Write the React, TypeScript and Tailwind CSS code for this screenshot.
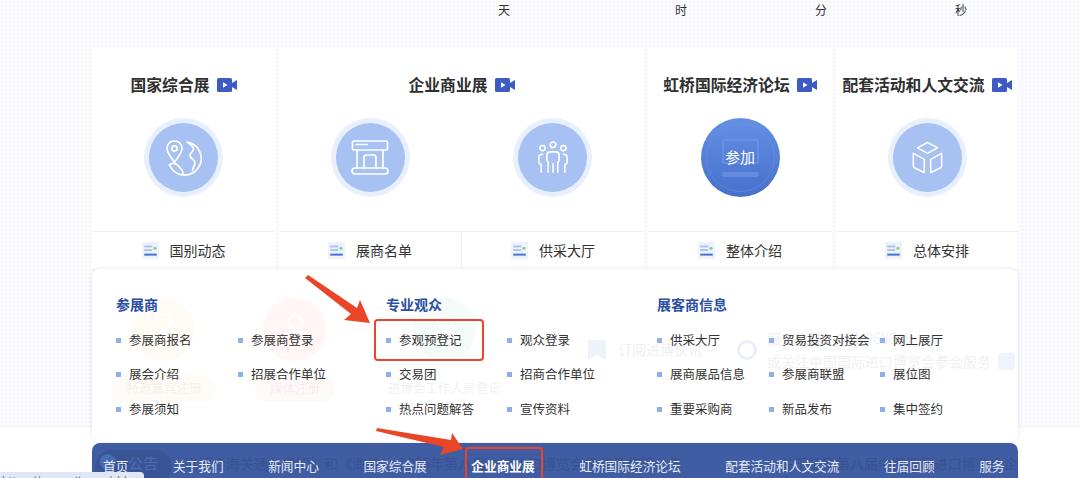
import type { ReactNode } from "react";

const FONT = "font-['Noto_Sans_CJK_SC','Liberation_Sans',sans-serif]";

const Camera = () => (
  <svg width="20" height="14" viewBox="0 0 20 14" className="shrink-0">
    <rect x="0" y="0" width="15" height="14" rx="1.5" fill="#3d5bc4" />
    <path d="M15 5l5-3v10l-5-3z" fill="#3d5bc4" />
    <path d="M6 4.2l4.5 2.8L6 9.8z" fill="#fff" />
  </svg>
);

const ListIcon = () => (
  <svg width="17" height="17" viewBox="0 0 19 19" className="shrink-0">
    <rect width="19" height="19" fill="#eef2fb" />
    <rect x="2.5" y="4" width="9" height="2" fill="#a9bfee" />
    <rect x="2.5" y="8" width="9" height="2" fill="#a9bfee" />
    <rect x="2.5" y="13" width="14" height="2.2" fill="#3f74dc" />
    <circle cx="14.5" cy="7" r="1.8" fill="#7fd28f" />
  </svg>
);

const iconProps = {
  fill: "none",
  stroke: "#fff",
  strokeWidth: 1.7,
  strokeLinecap: "round" as const,
  strokeLinejoin: "round" as const,
};

const GlobeIcon = () => (
  <svg width="36" height="36" viewBox="0 0 36 36" {...iconProps}>
    <path d="M8.5 1C4 1 1 4.400 1 8.500c0 4.800 4.800 9.500 7.500 14 2.700-4.500 7.500-9.200 7.500-14C16 4.400 13 1 8.500 1z" />
    <circle cx="8.5" cy="8.5" r="2.6" />
    <path d="M21 2.200A16.500 16.500 0 1 1 3.500 25" />
    <path d="M22 2.500c2.500 2 5.500 4 5.500 6.500 0 3-3.500 3.500-3.500 6.500 0 3.500 5 3.500 5 7 0 3-2 4.500-2.500 8" />
    <path d="M3.500 24.500c3-1.500 6.500-1 8.500 1 2 2.200 4.500 3 5.500 9" />
  </svg>
);

const BoothIcon = () => (
  <svg width="38" height="35" viewBox="0 0 38 35" {...iconProps}>
    <rect x="1.5" y="1" width="35" height="9" rx="1.5" />
    <path d="M5 4.500h11" />
    <path d="M6 10v18M32 10v18" />
    <rect x="1" y="28" width="36" height="6" rx="3" />
    <path d="M13 28V17.500a2.500 2.500 0 0 1 2.500-2.500h7a2.500 2.500 0 0 1 2.500 2.500V28" />
  </svg>
);

const PeopleIcon = () => (
  <svg width="32" height="34" viewBox="0 0 32 36" {...iconProps}>
    <circle cx="16" cy="4" r="3" />
    <circle cx="5" cy="7.5" r="2.8" />
    <circle cx="27" cy="7.5" r="2.8" />
    <path d="M11 33V22.500c-1.500-.5-1.500-1.500-1.500-3V15c0-2 1.500-3.500 3.500-3.500h6c2 0 3.500 1.500 3.500 3.500v4.500c0 1.500 0 2.500-1.500 3V33" />
    <path d="M16 24v9" />
    <path d="M5 14c-2.500 0-4 1-4 3.500v5c0 1.500 1.500 2 2.500 2.500v8" />
    <path d="M27 14c2.500 0 4 1 4 3.500v5c0 1.500-1.500 2-2.500 2.500v8" />
  </svg>
);

const BoxIcon = () => (
  <svg width="31" height="33" viewBox="0 0 34 36" {...iconProps}>
    <path d="M17 1.500L28 7.500 17 13.500 6 7.500z" />
    <path d="M1.500 13.500l12 6.500v14.500L3 29.500c-1-.5-1.500-1.200-1.500-2.500z" />
    <path d="M32.500 13.500l-12 6.500v14.500l10.500-5c1-.5 1.500-1.200 1.500-2.500z" />
  </svg>
);

const Circle = ({ children }: { children: ReactNode }) => (
  <div className="w-[79px] h-[79px] rounded-full bg-[#e8f0fe] flex items-center justify-center">
    <div className="w-[69px] h-[69px] rounded-full bg-[#a7c1f3] flex items-center justify-center">
      {children}
    </div>
  </div>
);

const JoinCircle = () => (
  <div className="relative w-[79px] h-[79px] rounded-full bg-gradient-to-b from-[#6490e4] to-[#4670cb] flex items-center justify-center">
    <div className="absolute inset-[5px] rounded-full border border-[#6f95e2] opacity-50" />
    <div className="absolute left-[21px] top-[21px] w-[37px] h-[25px] rounded-[2px] border-2 border-[#7498e4] opacity-60" />
    <div className="absolute left-[21px] top-[54px] w-[37px] h-[5px] rounded-full bg-[#7498e4] opacity-60" />
    <span className="relative text-white text-[15px]">参加</span>
  </div>
);

const Foot = ({ label, border }: { label: string; border?: boolean }) => (
  <div className={`flex-1 flex items-center justify-center gap-[11px] text-[14px] text-[#333] ${border ? "border-l border-[#eef0f5]" : ""}`}>
    <ListIcon />
    {label}
  </div>
);

const Card = ({ title, width, children, foot }: { title: string; width: string; children: ReactNode; foot: string[] }) => (
  <div className={`${width} h-[221px] bg-white flex flex-col shrink-0`}>
    <div className="h-[183px] flex flex-col items-center">
      <div className="h-[40px] mt-[17px] flex items-center gap-[7px] text-[15.8px] font-semibold text-[#2f2f2f] whitespace-nowrap">
        {title}
        <Camera />
      </div>
      <div className="w-full flex-1 flex items-start pt-[13px]">{children}</div>
    </div>
    <div className="flex-1 flex border-t border-[#eef0f5]">
      {foot.map((f, i) => (
        <Foot key={f} label={f} border={i > 0} />
      ))}
    </div>
  </div>
);

const Item = ({ label, width }: { label: string; width: string }) => (
  <div className={`${width} h-[34.5px] flex items-center shrink-0 text-[12.5px] text-[#333] whitespace-nowrap`}>
    <span className="w-[5px] h-[5px] bg-[#8fb0ec] mr-[8px] shrink-0" />
    {label}
  </div>
);

const MenuGroup = ({ title, width, colWidths, rows }: { title: string; width: string; colWidths: string[]; rows: string[][] }) => (
  <div className={`${width} shrink-0`}>
    <div className="h-[20px] flex items-center text-[14px] font-bold text-[#2b4fa3]">{title}</div>
    <div className="mt-[9px]">
      {rows.map((row) => (
        <div key={row.join()} className="flex">
          {row.map((label, i) => (
            <Item key={label} label={label} width={colWidths[i]} />
          ))}
        </div>
      ))}
    </div>
  </div>
);

const GhostFigure = () => (
  <svg width="40" height="34" viewBox="0 0 40 34" fill="none" stroke="#fff" strokeWidth="2">
    <circle cx="20" cy="9" r="7" />
    <path d="M6 32c2-10 8-14 14-14s12 4 14 14" />
  </svg>
);

const NAV = ["首页", "关于我们", "新闻中心", "国家综合展", "企业商业展", "虹桥国际经济论坛", "配套活动和人文交流", "往届回顾", "服务"];

export default function App() {
  return (
    <div className={`relative w-[1080px] h-[478px] overflow-hidden bg-white ${FONT}`}>
      {/* dotted page area */}
      <div className="h-[427px] bg-[#fcfcff] bg-[radial-gradient(#f3f5fc_0.8px,transparent_0.8px)] bg-[length:4px_4px] border-b border-[#f2f3f5]">
        <div className="h-[48px] text-[12px] text-[#333]">
          <div className="flex pt-[1px] pl-[498px]">
            <span className="w-[177px]">天</span>
            <span className="w-[140px]">时</span>
            <span className="w-[140px]">分</span>
            <span>秒</span>
          </div>
        </div>

        <div className="flex gap-[4px] pl-[92px]">
          <Card title="国家综合展" width="w-[183px]" foot={["国别动态"]}>
            <div className="w-full flex justify-center">
              <Circle><GlobeIcon /></Circle>
            </div>
          </Card>
          <Card title="企业商业展" width="w-[365px]" foot={["展商名单", "供采大厅"]}>
            <div className="w-1/2 flex justify-center">
              <Circle><BoothIcon /></Circle>
            </div>
            <div className="w-1/2 flex justify-center">
              <Circle><PeopleIcon /></Circle>
            </div>
          </Card>
          <Card title="虹桥国际经济论坛" width="w-[184px]" foot={["整体介绍"]}>
            <div className="w-full flex justify-center">
              <JoinCircle />
            </div>
          </Card>
          <Card title="配套活动和人文交流" width="w-[182px]" foot={["总体安排"]}>
            <div className="w-full flex justify-center">
              <Circle><BoxIcon /></Circle>
            </div>
          </Card>
        </div>
      </div>

      {/* dropdown, page content shows faintly through it */}
      <div className="absolute left-[92px] top-[269px] w-[926px] h-[173px]">
        <div className="relative w-full h-full bg-white rounded-[8px] shadow-[0_0_5px_rgba(0,0,0,0.1)] overflow-hidden">
          <div className="absolute left-[40px] top-[29px] w-[63px] h-[63px] rounded-full bg-[#fffbf5] flex items-center justify-center"><GhostFigure /></div>
          <div className="absolute left-[171px] top-[29px] w-[63px] h-[63px] rounded-full bg-[#fff6f5] flex items-center justify-center"><GhostFigure /></div>
          <div className="absolute left-[321px] top-[29px] w-[63px] h-[63px] rounded-full bg-[#f5fbf9] flex items-center justify-center"><GhostFigure /></div>
          <div className="absolute left-[20px] top-[106px] w-[104px] h-[27px] rounded-full bg-[#fffcf8] flex items-center justify-center text-[12.5px] text-[#f6f0e6]">特邀嘉宾注册</div>
          <div className="absolute left-[163px] top-[106px] w-[80px] h-[27px] rounded-full bg-[#fffafa] flex items-center justify-center text-[12.5px] text-[#f9ecea]">媒体注册</div>
          <div className="absolute left-[296px] top-[110px] text-[12.5px] text-[#eef1f5] whitespace-nowrap">进博会工作人员登记</div>
          <div className="absolute left-[496px] top-[71px] w-[18px] h-[20px] bg-[#eef2fb] [clip-path:polygon(0_0,100%_0,100%_100%,50%_75%,0_100%)]" />
          <div className="absolute left-[526px] top-[70px] text-[14px] text-[#eef0f4] whitespace-nowrap">订阅进博快讯</div>
          <div className="absolute left-[645px] top-[71px] w-[20px] h-[20px] rounded-full border-[3px] border-[#e9eefa]" />
          <div className="absolute left-[675px] top-[59px] text-[14px] text-[#eef0f4] whitespace-nowrap">服务热线：021-968888</div>
          <div className="absolute left-[675px] top-[82px] text-[14px] text-[#eef0f4] whitespace-nowrap">或关注中国国际进口博览会参会服务</div>
          <div className="absolute left-[906px] top-[84px] w-[17px] h-[17px] rounded-[4px] bg-[#eef3fd]" />

          <div className="relative flex pl-[24px] pt-[25px]">
            <MenuGroup
              title="参展商"
              width="w-[270px]"
              colWidths={["w-[122px]", "w-[122px]"]}
              rows={[["参展商报名", "参展商登录"], ["展会介绍", "招展合作单位"], ["参展须知"]]}
            />
            <MenuGroup
              title="专业观众"
              width="w-[271px]"
              colWidths={["w-[121px]", "w-[121px]"]}
              rows={[["参观预登记", "观众登录"], ["交易团", "招商合作单位"], ["热点问题解答", "宣传资料"]]}
            />
            <MenuGroup
              title="展客商信息"
              width="w-[330px]"
              colWidths={["w-[112px]", "w-[111px]", "w-[100px]"]}
              rows={[
                ["供采大厅", "贸易投资对接会", "网上展厅"],
                ["展商展品信息", "参展商联盟", "展位图"],
                ["重要采购商", "新品发布", "集中签约"],
              ]}
            />
          </div>
        </div>
      </div>

      {/* nav bar */}
      <div className="absolute left-[92px] top-[443px] w-[926px] h-[40px] bg-[#405da4] rounded-t-[8px] overflow-hidden">
        <div className="absolute left-[3px] top-[7px] w-[77px] h-[33px] rounded-full bg-[#3a5596]" />
        <div className="absolute left-[8px] top-[11px] w-[16px] h-[16px] rounded-full bg-[#4a69b3]" />
        <div className="absolute left-[36px] top-[9px] text-[15px] text-[#4c6cb8] whitespace-nowrap">公告</div>
        <div className="absolute left-[92px] top-[10px] text-[14px] text-[#38528f] whitespace-nowrap">进博会海关通关须知》和《海关</div>
        <div className="absolute left-[307px] top-[10px] text-[14px] text-[#38528f] whitespace-nowrap">2025年第八届中国进口博览会展览品监管公告</div>
        <div className="absolute left-[688px] top-[10px] text-[14px] text-[#38528f] whitespace-nowrap">关于征集第八届中国国际进口博览会企</div>
        <div className="relative flex gap-[44.5px] pl-[11px] pt-[13px] text-[12.7px] text-[#e6ebf6] whitespace-nowrap">
          {NAV.map((n) => (
            <span key={n} className={n === "企业商业展" ? "font-bold text-white" : ""}>
              {n}
            </span>
          ))}
        </div>
      </div>

      {/* annotation arrows + boxes */}
      <div className="absolute left-[374px] top-[319px] w-[110px] h-[42px] rounded-[4px] border-2 border-[#e8452c]" />
      <div className="absolute left-[465px] top-[447px] w-[78px] h-[40px] rounded-[4px] border-2 border-[#e8452c]" />
      <svg className="absolute left-0 top-0" width="1080" height="478" viewBox="0 0 1080 478">
        <path d="M305 278l3-3 49 33 3-8 10 23-26-3 7-6z" fill="#ea4527" />
        <path d="M376 431l1-3 74 12 1-7 11 16-23 6 4-8z" fill="#ea4527" />
      </svg>

      {/* browser status bar */}
      <div className="absolute left-0 bottom-0 w-[144px] h-[6px] bg-[#dfe7f7] rounded-tr-[4px] overflow-hidden pl-[2px] text-[11px] leading-[6px] text-[#444] whitespace-nowrap">
        <span className="relative top-[5px]">https://www.ciie.org/zbh</span>
      </div>
    </div>
  );
}
